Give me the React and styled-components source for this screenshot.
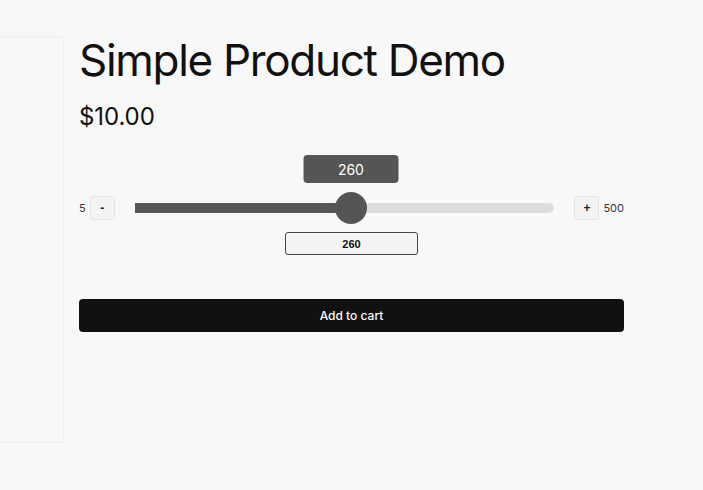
import React, { useState } from "react";
import styled, { createGlobalStyle } from "styled-components";

const Global = createGlobalStyle`
  html, body { margin: 0; padding: 0; background: #f8f8f8; }
  body { font-family: Inter, "Liberation Sans", sans-serif; color: #111; }
  * { box-sizing: border-box; }
`;

const Page = styled.div`
  display: flex;
  align-items: flex-start;
  width: 703px;
  min-height: 490px;
`;

const SidePanel = styled.aside`
  flex: 0 0 64px;
  height: 407px;
  margin-top: 36px;
  background: #f6f7f7;
  border: 1px solid #eef0f0;
  border-left: none;
`;

const Main = styled.main`
  width: 545px;
  margin-left: 15px;
  padding-top: 34px;
  display: flex;
  flex-direction: column;
`;

const Title = styled.h1`
  margin: 0;
  font-size: 44px;
  font-weight: 400;
  line-height: 53px;
  letter-spacing: -1.3px;
  color: #111;
`;

const Price = styled.div`
  margin-top: 15px;
  font-size: 24px;
  line-height: 29px;
  letter-spacing: -0.1px;
  color: #111;
`;

const SliderArea = styled.div`
  margin-top: 24px;
  padding-top: 37px;
  display: flex;
  flex-direction: column;
  align-items: center;
`;

const Row = styled.div`
  width: 100%;
  height: 32px;
  display: flex;
  align-items: center;
`;

const Bound = styled.span`
  font-size: 11px;
  color: #333;
  line-height: 1;
`;

const StepButton = styled.button`
  width: 25px;
  height: 24px;
  margin: ${(p) => (p.$side === "left" ? "0 20px 0 4px" : "0 4px 0 20px")};
  padding: 0;
  border: 1px solid #e4e4e4;
  border-radius: 3px;
  background: #f4f4f4;
  font-family: "Liberation Sans", Arial, sans-serif;
  font-size: 12px;
  font-weight: 700;
  color: #222;
  display: flex;
  align-items: center;
  justify-content: center;
`;

const Track = styled.div`
  position: relative;
  flex: 1;
  height: 10px;
  border-radius: 5px;
  background: #dddddd;
`;

const Fill = styled.div`
  height: 100%;
  background: #555555;
`;

const Thumb = styled.div`
  position: absolute;
  top: 50%;
  width: 32px;
  height: 32px;
  margin: -16px 0 0 -16px;
  border-radius: 50%;
  background: #555555;
`;

const Bubble = styled.div`
  position: absolute;
  left: 50%;
  bottom: 41px;
  transform: translateX(-50%);
  width: 95px;
  height: 28px;
  border-radius: 4px;
  background: #555555;
  color: #fff;
  font-size: 14px;
  display: flex;
  align-items: center;
  justify-content: center;
`;

const ValueInput = styled.input`
  margin-top: 8px;
  width: 133px;
  height: 23px;
  border: 1.5px solid #444;
  border-radius: 3px;
  background: #f4f4f4;
  text-align: center;
  font-family: "Liberation Sans", Arial, sans-serif;
  font-size: 11px;
  font-weight: 700;
  color: #111;
  outline: none;
`;

const CartButton = styled.button`
  margin-top: 44px;
  height: 33px;
  width: 100%;
  border: none;
  border-radius: 4px;
  background: #111111;
  color: #fff;
  font-family: Inter, "Liberation Sans", sans-serif;
  font-size: 12px;
  font-weight: 500;
`;

const MIN = 5;
const MAX = 500;

export default function App() {
  const [value, setValue] = useState(260);
  const pct = ((value - MIN) / (MAX - MIN)) * 100;

  return (
    <>
      <Global />
      <Page>
        <SidePanel />
        <Main>
          <Title>Simple Product Demo</Title>
          <Price>$10.00</Price>
          <SliderArea>
            <Row>
              <Bound>{MIN}</Bound>
              <StepButton $side="left" onClick={() => setValue((v) => Math.max(MIN, v - 1))}>
                -
              </StepButton>
              <Track>
                <Fill style={{ width: `${pct}%` }} />
                <Thumb style={{ left: `${pct}%` }}>
                  <Bubble>{value}</Bubble>
                </Thumb>
              </Track>
              <StepButton $side="right" onClick={() => setValue((v) => Math.min(MAX, v + 1))}>
                +
              </StepButton>
              <Bound>{MAX}</Bound>
            </Row>
            <ValueInput
              value={value}
              onChange={(e) => {
                const n = Number(e.target.value);
                if (!Number.isNaN(n)) setValue(Math.min(MAX, Math.max(MIN, n)));
              }}
            />
          </SliderArea>
          <CartButton>Add to cart</CartButton>
        </Main>
      </Page>
    </>
  );
}
